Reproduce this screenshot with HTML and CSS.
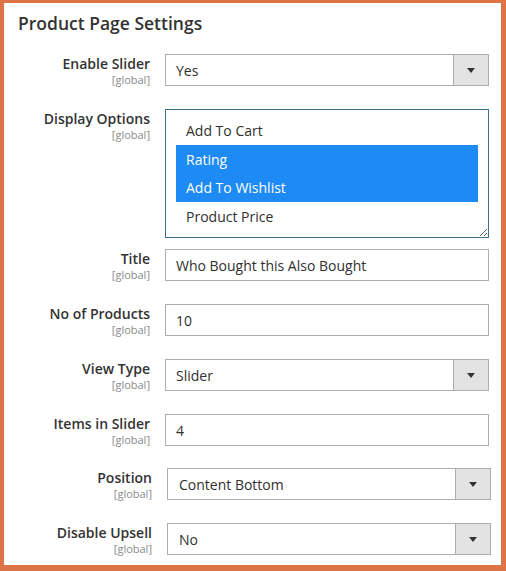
FILE: index.html
```html
<!DOCTYPE html>
<html>
<head>
<meta charset="utf-8">
<link rel="stylesheet" href="styles.css">
</head>
<body>
<div class="frame">
  <h2 class="title">Product Page Settings</h2>
  <div class="form">
    <div class="row">
      <div class="label"><span class="name">Enable Slider</span><span class="scope">[global]</span></div>
      <div class="select"><span class="value">Yes</span><span class="arrow"></span></div>
    </div>
    <div class="row row-multi">
      <div class="label"><span class="name">Display Options</span><span class="scope">[global]</span></div>
      <div class="multi">
        <div class="opt">Add To Cart</div>
        <div class="opt sel">Rating</div>
        <div class="opt sel">Add To Wishlist</div>
        <div class="opt">Product Price</div>
      </div>
    </div>
    <div class="row">
      <div class="label"><span class="name">Title</span><span class="scope">[global]</span></div>
      <div class="input">Who Bought this Also Bought</div>
    </div>
    <div class="row">
      <div class="label"><span class="name">No of Products</span><span class="scope">[global]</span></div>
      <div class="input">10</div>
    </div>
    <div class="row">
      <div class="label"><span class="name">View Type</span><span class="scope">[global]</span></div>
      <div class="select"><span class="value">Slider</span><span class="arrow"></span></div>
    </div>
    <div class="row">
      <div class="label"><span class="name">Items in Slider</span><span class="scope">[global]</span></div>
      <div class="input">4</div>
    </div>
    <div class="row row-shift row-tight">
      <div class="label"><span class="name">Position</span><span class="scope">[global]</span></div>
      <div class="select"><span class="value">Content Bottom</span><span class="arrow"></span></div>
    </div>
    <div class="row row-shift">
      <div class="label"><span class="name">Disable Upsell</span><span class="scope">[global]</span></div>
      <div class="select"><span class="value">No</span><span class="arrow"></span></div>
    </div>
  </div>
</div>
</body>
</html>
```
FILE: styles.css
```css
html, body {
  margin: 0;
  padding: 0;
  background: #fff;
}
.frame {
  box-sizing: border-box;
  width: 506px;
  height: 571px;
  border-style: solid;
  border-color: #dc7446;
  border-width: 3px 5px 6px 4px;
  font-family: "Open Sans", "Liberation Sans", sans-serif;
  color: #303030;
  overflow: hidden;
}
.title {
  margin: 0;
  padding: 8px 0 0 14px;
  font-size: 17.5px;
  font-weight: 600;
  line-height: 24px;
  color: #333;
}
.form {
  display: flex;
  flex-direction: column;
  gap: 23px;
  padding-top: 19px;
}
.row {
  display: grid;
  grid-template-columns: 146px 324px;
  column-gap: 15px;
  align-items: start;
}
.row-multi {
  margin-bottom: -12px;
}
.row-tight {
  margin-top: -1px;
}
.row-shift {
  padding-left: 2px;
}
.label {
  display: flex;
  flex-direction: column;
  align-items: flex-end;
  text-align: right;
  height: 32px;
}
.name {
  font-size: 14px;
  font-weight: 600;
  line-height: 18px;
  padding-top: 1px;
  color: #333;
}
.scope {
  font-size: 11px;
  line-height: 13px;
  color: #8a8a8a;
}
.select, .input {
  box-sizing: border-box;
  height: 32px;
  border: 1px solid #adadad;
  display: flex;
  align-items: center;
  font-size: 14px;
  background: #fff;
}
.input {
  padding-left: 10px;
}
.select .value {
  flex: 1;
  padding-left: 10px;
}
.row-shift .select .value {
  padding-left: 11px;
}
.select .arrow {
  align-self: stretch;
  width: 34px;
  background: #e3e3e3;
  border-left: 1px solid #adadad;
  display: flex;
  align-items: center;
  justify-content: center;
}
.select .arrow::after {
  content: "";
  width: 0;
  height: 0;
  border-left: 4px solid transparent;
  border-right: 4px solid transparent;
  border-top: 5px solid #333;
  margin-top: 1px;
}
.multi {
  box-sizing: border-box;
  height: 129px;
  border: 1px solid #3b7090;
  padding: 6px 10px;
  font-size: 14px;
  resize: vertical;
  overflow: auto;
}
.opt {
  box-sizing: border-box;
  height: 28.5px;
  line-height: 27.5px;
  padding: 1px 0 0 10px;
}
.opt.sel {
  background: #1e8af3;
  color: #fff;
}
```
